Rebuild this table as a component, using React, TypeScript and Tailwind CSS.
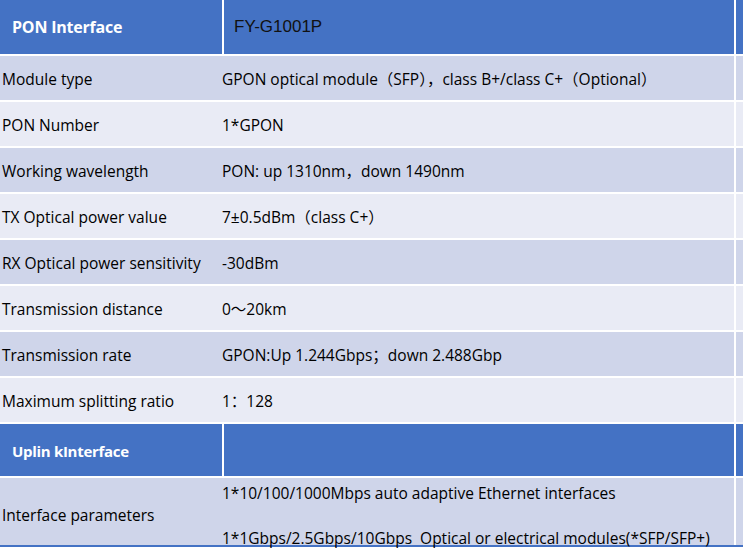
const rows: [string, string][] = [
  ["Module type", "GPON optical module（SFP），class B+/class C+（Optional）"],
  ["PON Number", "1*GPON"],
  ["Working wavelength", "PON: up 1310nm，down 1490nm"],
  ["TX Optical power value", "7±0.5dBm（class C+）"],
  ["RX Optical power sensitivity", "-30dBm"],
  ["Transmission distance", "0～20km"],
  ["Transmission rate", "GPON:Up 1.244Gbps；down 2.488Gbp"],
  ["Maximum splitting ratio", "1：128"],
];

const body = "font-['Open_Sans','Noto_Sans_CJK_SC',sans-serif] text-[15.5px] text-black";

export default function App() {
  return (
    <div className="w-[743px] h-[548px] bg-white overflow-hidden">
      <div className={`grid grid-cols-[222px_510px_7px] gap-[2px] bg-white border-b-2 border-[#4472C4] ${body}`}>
        {/* PON header */}
        <div className="h-[54px] bg-[#4472C4] flex items-center pl-[12px] font-bold text-white text-[16px] tracking-[-0.2px]">PON Interface</div>
        <div className="h-[54px] bg-[#4472C4] flex items-center pl-[10px] text-[17px] text-[#111] font-['Liberation_Sans',sans-serif]">FY-G1001P</div>
        <div className="h-[54px] bg-[#4472C4]" />

        {rows.map(([label, value], i) => {
          const bg = i % 2 === 0 ? "bg-[#CFD5EA]" : "bg-[#E9EBF5]";
          return [
            <div key={`a${i}`} className={`h-[44px] ${bg} flex items-center pt-[4px] pl-[2px] whitespace-nowrap`}>{label}</div>,
            <div key={`b${i}`} className={`h-[44px] ${bg} flex items-center pt-[4px] -ml-[2px] whitespace-nowrap`}>{value}</div>,
            <div key={`c${i}`} className={`h-[44px] ${bg}`} />,
          ];
        })}

        {/* Uplink header */}
        <div className="h-[52px] bg-[#4472C4] flex items-center pt-[2px] pl-[12px] font-bold text-white text-[15px] tracking-[-0.3px]">Uplin kInterface</div>
        <div className="h-[52px] bg-[#4472C4]" />
        <div className="h-[52px] bg-[#4472C4]" />

        <div className="h-[67px] bg-[#CFD5EA] flex items-center pt-[8px] pl-[2px]">Interface parameters</div>
        <div className="h-[67px] bg-[#CFD5EA] -ml-[2px] flex flex-col gap-[25px] pt-[5px] leading-[20px] whitespace-nowrap">
          <div>1*10/100/1000Mbps auto adaptive Ethernet interfaces</div>
          <div>1*1Gbps/2.5Gbps/10Gbps&nbsp; Optical or electrical modules(*SFP/SFP+)</div>
        </div>
        <div className="h-[67px] bg-[#CFD5EA]" />
      </div>
    </div>
  );
}
